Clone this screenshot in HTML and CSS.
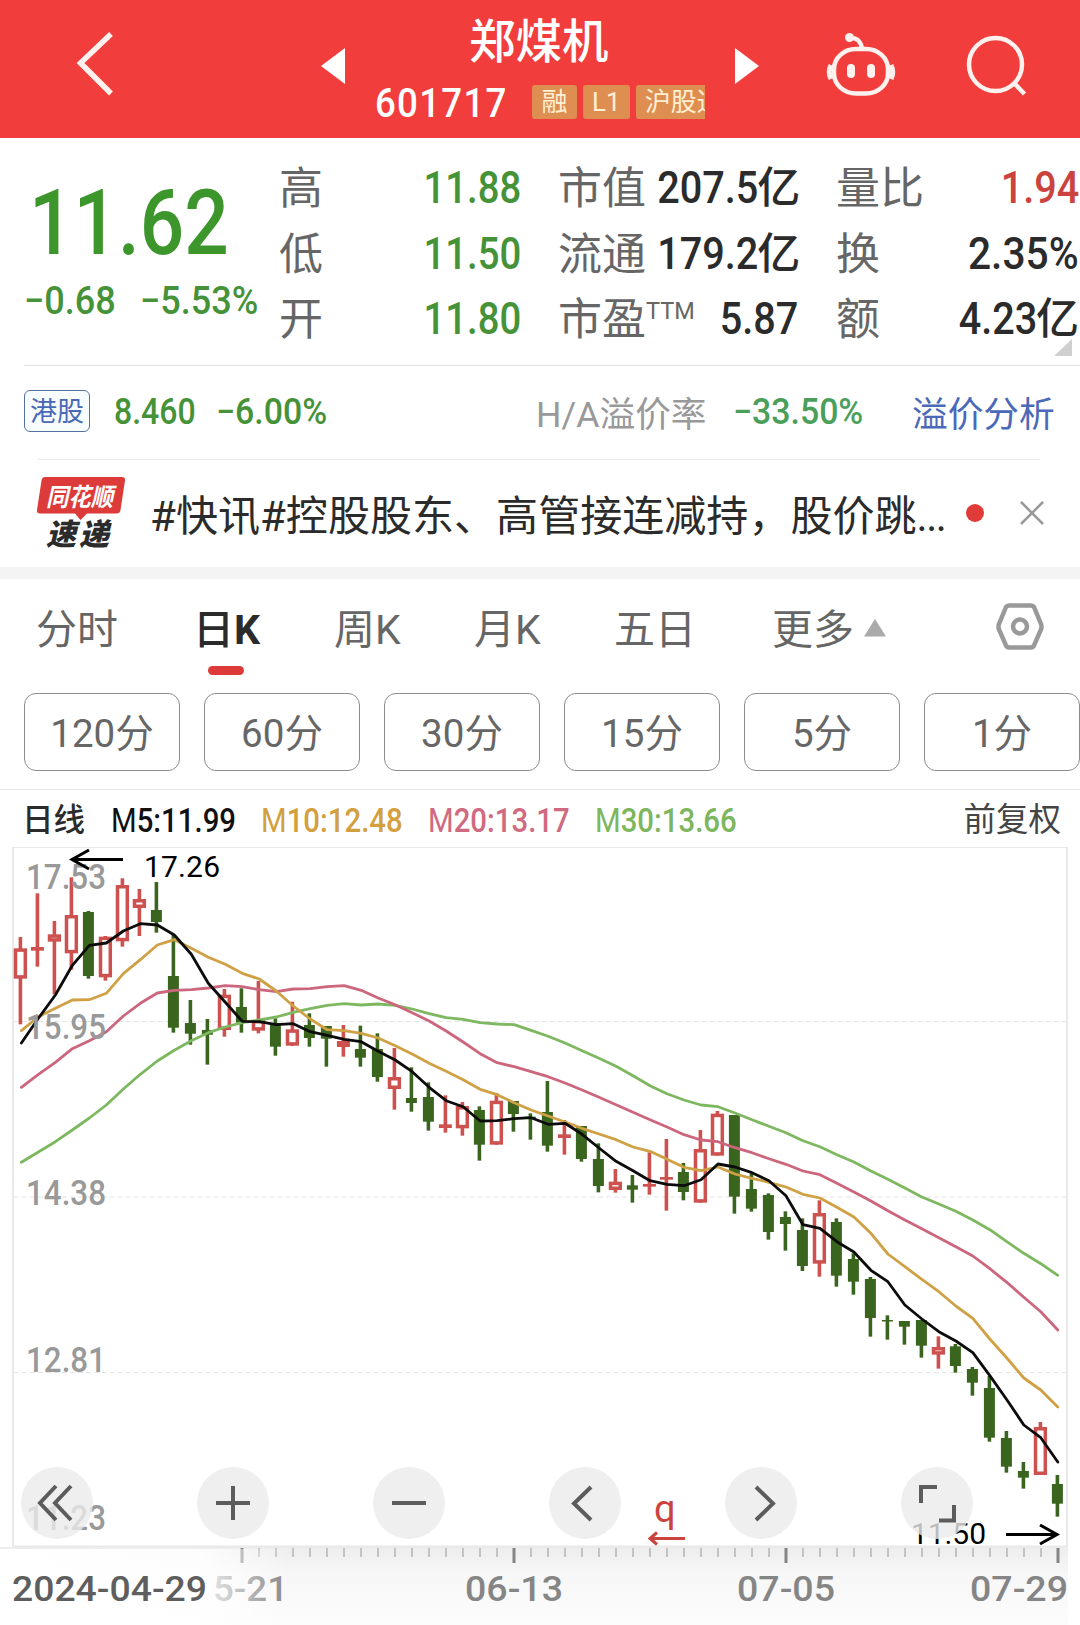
FILE: index.html
```html
<!DOCTYPE html>
<html lang="zh-CN">
<head>
<meta charset="utf-8">
<title>郑煤机 601717</title>
<link rel="stylesheet" href="styles.css">
</head>
<body>
<header class="topbar">
  <svg class="back" width="40" height="68" viewBox="74 30 40 68"><path d="M111 34 80.500 63 111 93.500"/></svg>
  <svg class="prev" width="24" height="36" viewBox="0 0 24 36"><path d="M0 18 24 0V36Z"/></svg>
  <div class="stock">
    <h1>郑煤机</h1>
    <div class="code"><span class="num">601717</span><div class="tags"><i>融</i><i>L1</i><i>沪股通</i></div></div>
  </div>
  <svg class="next" width="24" height="36" viewBox="0 0 24 36"><path d="M24 18 0 0V36Z"/></svg>
  <svg class="robot" width="72" height="66" viewBox="825 32 72 66">
    <rect x="834" y="49" width="54" height="44.500" rx="22" ry="20"/>
    <path d="M862 49C861 41 857 38 850 37.500"/>
    <path d="M831 65Q827.500 72 831 79M891 65Q894.500 72 891 79" stroke-width="5"/>
    <circle class="fill" cx="849.500" cy="37.500" r="4.500"/>
    <rect class="fill" x="847" y="64" width="8" height="14" rx="4"/>
    <rect class="fill" x="867" y="64" width="8" height="14" rx="4"/>
  </svg>
  <svg class="search" width="64" height="64" viewBox="964 34 64 64"><circle cx="994.500" cy="64.500" r="26.500"/><path d="M1013 83 1023.500 94"/></svg>
</header>

<section class="quote">
  <div class="price">
    <div class="last num">11.62</div>
    <div class="change"><span class="num">−0.68</span><span class="num">−5.53%</span></div>
  </div>
  <dl class="col c1">
    <div><dt>高</dt><dd><span class="num down">11.88</span></dd></div>
    <div><dt>低</dt><dd><span class="num down">11.50</span></dd></div>
    <div><dt>开</dt><dd><span class="num down">11.80</span></dd></div>
  </dl>
  <dl class="col c2">
    <div><dt>市值</dt><dd><span class="num">207.5</span><b>亿</b></dd></div>
    <div><dt>流通</dt><dd><span class="num">179.2</span><b>亿</b></dd></div>
    <div><dt>市盈<sup>TTM</sup></dt><dd><span class="num">5.87</span></dd></div>
  </dl>
  <dl class="col c3">
    <div><dt>量比</dt><dd><span class="num up">1.94</span></dd></div>
    <div><dt>换</dt><dd><span class="num pct">2.35%</span></dd></div>
    <div><dt>额</dt><dd><span class="num">4.23</span><b>亿</b></dd></div>
  </dl>
  <svg class="corner" width="18" height="17" viewBox="0 0 18 17"><path d="M18 0V17H0Z"/></svg>
</section>

<section class="hk">
  <span class="hk-tag">港股</span>
  <span class="hk-price"><span class="num">8.460</span></span>
  <span class="hk-chg"><span class="num">−6.00%</span></span>
  <span class="ha">H/A溢价率</span>
  <span class="ha-val"><span class="num">−33.50%</span></span>
  <a class="ha-link">溢价分析</a>
</section>

<section class="news">
  <div class="logo">
    <svg width="90" height="46" viewBox="36 476 90 46"><path d="M45 477H122Q125.500 477 125 480.500L120.500 510Q120 513.500 116.500 513.500H87L80.500 520 75 513.500H40Q36.500 513.500 37 510L41.500 480.500Q42 477 45 477Z"/><text x="46" y="505.500" textLength="67" lengthAdjust="spacingAndGlyphs">同花顺</text></svg>
    <b>速递</b>
  </div>
  <p>#快讯#控股股东、高管接连减持，股价跳<span>...</span></p>
  <i class="dot"></i>
  <svg class="close" width="26" height="26" viewBox="0 0 26 26"><path d="M2 2 24 24M24 2 2 24"/></svg>
</section>

<nav class="tabs">
  <span>分时</span><span class="active">日<b>K</b></span><span>周K</span><span>月K</span><span>五日</span>
  <span class="more">更多<svg width="24" height="19" viewBox="0 0 24 19"><path d="M12 1 23 18.500H1Z"/></svg></span>
  <svg class="gear" width="50" height="48" viewBox="995 603 50 48"><path d="M1009 605.500H1031Q1033 605.500 1034 607L1041 624Q1042 627 1041 629.500L1034 645.500Q1033 647.500 1031 647.500H1009Q1007 647.500 1006 645.500L999 629.500Q998 627 999 624L1006 607Q1007 605.500 1009 605.500Z"/><circle cx="1020" cy="626.500" r="7"/></svg>
</nav>
<div class="periods"><span>120分</span><span>60分</span><span>30分</span><span>15分</span><span>5分</span><span>1分</span></div>

<div class="legend">
  <b class="name">日线</b>
  <div class="m5"><span class="num"><i>M</i>5:11.99</span></div><div class="m10"><span class="num"><i>M</i>10:12.48</span></div><div class="m20"><span class="num"><i>M</i>20:13.17</span></div><div class="m30"><span class="num"><i>M</i>30:13.66</span></div>
  <span class="adj">前复权</span>
</div>

<section class="chart">
  <svg id="kline" width="1080" height="778" viewBox="0 847 1080 778">
    <defs>
      <linearGradient id="shade" x1="0" y1="0" x2="0" y2="1"><stop offset="0" stop-color="#ededed"/><stop offset=".35" stop-color="#f7f7f7"/><stop offset="1" stop-color="#fcfcfc"/></linearGradient>
      <linearGradient id="fade" x1="0" y1="0" x2="1" y2="0"><stop offset="0" stop-color="#fff"/><stop offset=".7" stop-color="#fff" stop-opacity=".85"/><stop offset="1" stop-color="#fff" stop-opacity="0"/></linearGradient>
    </defs>
    <rect x="0" y="1547" width="1068" height="78" fill="url(#shade)"/>
    <rect class="frame" x="13" y="847" width="1054" height="699.500"/>
    <path class="grid" d="M14 1021.500H1066M14 1197H1066M14 1372.500H1066"/>
    <g id="candles"></g>
    <g id="averages"></g>
    <g class="scale">
      <text x="26" y="889" textLength="80" lengthAdjust="spacingAndGlyphs">17.53</text>
      <text x="26" y="1039" textLength="80" lengthAdjust="spacingAndGlyphs">15.95</text>
      <text x="26" y="1205" textLength="80" lengthAdjust="spacingAndGlyphs">14.38</text>
      <text x="26" y="1372" textLength="80" lengthAdjust="spacingAndGlyphs">12.81</text>
      <text x="26" y="1530" textLength="80" lengthAdjust="spacingAndGlyphs">11.23</text>
    </g>
    <path class="arrow" d="M123 859.500H73M89 850 72 859.500 89 869"/>
    <text class="mark" x="144" y="877" textLength="76">17.26</text>
    <path class="arrow" d="M1006 1534.500H1056M1040 1525 1057 1534.500 1040 1544"/>
    <text class="mark" x="911" y="1543.500" textLength="75">11.50</text>
    <text class="q" x="654" y="1522">q</text>
    <path class="qarrow" d="M685 1538.500H650M657 1532.500 650 1538.500 657 1544.500"/>
    <g id="ticks"></g>
    <g class="dates">
      <text x="213" y="1601" textLength="75" lengthAdjust="spacingAndGlyphs">5-21</text>
      <text x="465" y="1601" textLength="98" lengthAdjust="spacingAndGlyphs">06-13</text>
      <text x="737" y="1601" textLength="98" lengthAdjust="spacingAndGlyphs">07-05</text>
      <text x="970" y="1601" textLength="98" lengthAdjust="spacingAndGlyphs">07-29</text>
      <rect x="0" y="1549" width="290" height="76" fill="url(#fade)"/>
      <text class="first" x="12" y="1601" textLength="195" lengthAdjust="spacingAndGlyphs">2024-04-29</text>
    </g>
  </svg>
  <div class="tools">
    <svg viewBox="0 0 72 72"><path d="M35 19 19 36 35 53M50 19 34 36 50 53"/></svg>
    <svg viewBox="0 0 72 72"><path d="M36 19V53M19 36H53"/></svg>
    <svg viewBox="0 0 72 72"><path d="M19 36H53"/></svg>
    <svg viewBox="0 0 72 72"><path d="M42 20 25 36.500 42 53"/></svg>
    <svg viewBox="0 0 72 72"><path d="M31 20 48 36.500 31 53"/></svg>
    <svg viewBox="0 0 72 72"><path d="M20 36V20H36M53 38V53.500H38"/></svg>
  </div>
</section>
<script src="chart.js"></script>
</body>
</html>
```
FILE: styles.css
```css
* { box-sizing: border-box; }
body { margin: 0; width: 1080px; height: 1625px; overflow: hidden; background: #fff; color: #2b2b2b; font-family: Roboto, "Noto Sans CJK SC", sans-serif; }
h1, p, dl, dd { margin: 0; }
i { font-style: normal; }
svg { display: block; flex: none; }
/* Figures are set narrower than the text face. */
.num { display: inline-block; font-weight: 500; white-space: nowrap; transform: scaleX(.89); transform-origin: 0 50%; }
.down { color: #459238; }
.up { color: #cb433f; }

.topbar { display: flex; height: 138px; background: #f13d3c; color: #fff; }
.topbar svg { fill: none; stroke: #fff2ee; stroke-width: 4.500; }
.topbar .prev, .topbar .next { fill: #fff; stroke: none; margin-top: 48px; }
.topbar .fill { fill: #fff2ee; stroke: none; }
.back { margin: 30px 0 0 74px; }
.topbar .back { stroke-width: 5.500; }
.prev { margin-left: 207px; }
.stock { width: 360px; margin-left: 30px; }
.stock h1 { margin: 13px 0 0 94px; font-size: 46.500px; line-height: 58px; font-weight: 500; }
.code { display: flex; height: 34px; margin-top: 14px; }
.code .num { width: 157px; font-size: 41px; line-height: 36px; letter-spacing: 1.400px; }
.code .num { transform: scaleX(.895); }
.tags { flex: none; display: flex; gap: 6px; width: 173px; overflow: hidden; }
.tags i { flex: none; height: 34px; padding: 0 9px; border-radius: 3px; background: #df8e52; color: #fff0d2; font-size: 26px; line-height: 35px; }
.tags i:first-child { padding: 0 9.500px; }
.robot { margin: 32px 0 0 66px; }
.search { margin: 34px 0 0 68px; }

.quote { position: relative; display: flex; height: 228px; margin-left: 24px; border-bottom: 1px solid #dedede; }
.price { width: 255px; color: #3c962b; }
.last { margin: 33px 0 0 5px; font-size: 90px; line-height: 106px; }
.price .last { transform: scaleX(.87); }
.change { display: flex; color: #459238; font-size: 39px; line-height: 48px; }
.price .change .num { transform: scaleX(.925); }
.change .num:first-child { width: 116px; }
.col { padding-top: 18px; }
.col > div { display: flex; justify-content: space-between; height: 65.500px; line-height: 65px; white-space: nowrap; }
.col dt { color: #666; font-size: 44px; padding-top: 1px; }
.col dd { font-size: 44px; }
.col .num { transform-origin: 100% 50%; }
.c1 .num { transform: scaleX(.87); }
.c2 .num, .c3 .num { transform: scaleX(.9); }
.col .pct { transform: scaleX(.925); }
.col b { font-weight: 500; font-size: 43px; margin-left: -1px; }
.col sup { position: relative; top: 0; font-size: 23.500px; line-height: 0; }
.c1 { width: 242px; }
.c2 { width: 240px; margin-left: 37px; }
.c3 { width: 243px; margin-left: 38px; }
.corner { position: absolute; right: 8px; bottom: 9px; fill: #cfcfcf; }

.hk { display: flex; align-items: center; height: 94px; margin: 0 40px 0 38px; padding-bottom: 1px; border-bottom: 1px solid #e9e9e9; font-size: 36px; white-space: nowrap; }
.hk > * { flex: none; }
.hk-tag { margin: -3px 0 0 -14px; width: 66px; height: 42px; border: 1px solid #56709f; border-radius: 6px; background: #f7fcff; color: #4968b5; font-size: 27px; line-height: 42px; text-align: center; }
.hk-price { width: 102px; margin-left: 24px; color: #459238; }
.hk-chg { width: 320px; color: #459238; }
.hk-chg .num, .ha-val .num { transform: scaleX(.94); }
.ha { width: 197px; margin-top: -2px; color: #999; font-size: 35.700px; }
.ha-val { width: 179px; color: #4a9f5a; }
.ha-link { margin-top: -2px; color: #4a69b8; font-size: 35.700px; }

.news { display: flex; align-items: center; height: 119px; border-bottom: 12px solid #f4f4f4; white-space: nowrap; }
.logo { width: 116px; height: 107px; padding: 16px 0 0 36px; }
.logo path { fill: #dd3b39; }
.logo text { fill: #fff; font: italic 700 25px "Noto Sans CJK SC"; }
.logo b { display: block; margin-left: 10px; font: italic 900 30px/30px "Noto Sans CJK SC"; letter-spacing: 3px; margin-top: -5px; }
.news p { width: 814px; padding-left: 34px; font-size: 42.050px; margin-top: -3px; }
.news p span { letter-spacing: -1.500px; }
.dot { width: 18px; height: 18px; border-radius: 50%; background: #e13b39; margin-left: 36px; margin-top: -2px; }
.close { margin-left: 35px; margin-top: -2px; stroke: #999; stroke-width: 2.500; }

.tabs { position: relative; display: flex; height: 114px; padding-left: 36px; font-size: 41px; line-height: 102px; color: #666; white-space: nowrap; }
.tabs span { width: 140px; }
.tabs span:first-child { width: 157px; }
.tabs .active { position: relative; width: 141px; color: #2b2b2b; font-weight: 500; }
.active::after { content: ""; position: absolute; left: 15px; top: 87px; width: 36px; height: 9px; border-radius: 5px; background: #dd3b39; }
.tabs .more { display: flex; align-items: center; gap: 9px; width: 223px; height: 102px; margin-left: 18px; }
.more svg { fill: #aaa; margin-top: -6px; }
.gear { margin-top: 24px; fill: none; stroke: #999; stroke-width: 4.500; }

.periods { display: flex; gap: 24px; height: 96px; padding-left: 24px; }
.periods span { flex: none; width: 156px; height: 78px; border: 1px solid #8c8c8c; border-radius: 12px; color: #666; font-size: 38.500px; line-height: 80px; text-align: center; }

.legend { display: flex; height: 58px; border-top: 1px solid #e6e6e6; padding: 0 18px 0 22px; font-size: 33px; line-height: 61px; white-space: nowrap; }
.legend > * { flex: none; }
.legend i { font-weight: 400; }
.legend .name { width: 89px; font-size: 31.500px; font-weight: 500; }
.m5 { width: 150px; color: #111; }
.m10 { width: 167px; color: #d3a03f; }
.m20 { width: 167px; color: #cf6a80; }
.m30 { width: 150px; color: #7db65c; }
.adj { margin-left: auto; margin-right: 1px; font-size: 32.500px; color: #444; }

.chart { position: relative; height: 778px; }
.frame { fill: none; stroke: #e9e9e9; stroke-width: 2; }
.grid { fill: none; stroke: #e4e4e4; stroke-dasharray: 5 3; }
.scale { fill: #999; font-size: 35px; font-weight: 500; }
.arrow { fill: none; stroke: #000; stroke-width: 3; }
.mark { fill: #000; font-size: 30px; }
.q { fill: #cb433f; font-size: 38px; }
.qarrow { fill: none; stroke: #cb433f; stroke-width: 3; }
.dates { fill: #858585; font-size: 35px; font-weight: 500; }
.dates .first { fill: #5e5e5e; }
.rise { fill: #fff; stroke: #cd514e; stroke-width: 3.500; }
.fall { fill: #3a651f; stroke: #3a651f; }
.wick { stroke-width: 3.600; }
.avg { fill: none; stroke-width: 2.800; stroke-linejoin: round; stroke-linecap: round; }
.tick { stroke: #c2c2c2; stroke-width: 2; }
.tick.major { stroke: #858585; stroke-width: 3; }
.tools { position: absolute; left: 21px; top: 620px; display: flex; gap: 104px; }
.tools svg { width: 72px; height: 72px; border-radius: 50%; background: rgba(235, 235, 235, .8); fill: none; stroke: #5c5c5c; stroke-width: 4; }
```
FILE: chart.js
```js
const NS = 'http://www.w3.org/2000/svg';
const X0 = 20.4, STEP = 17;

function add(parent, tag, attrs) {
  const el = document.createElementNS(NS, tag);
  for (const k in attrs) el.setAttribute(k, attrs[k]);
  parent.appendChild(el);
}

// Each series is stored in thirds of a pixel below a base line.
const groups = [
  { base: 840, rows: 'r 291 553 325 416,r 160 380 321 332,r 243 463 283 305,r 112 389 225 340,g 213 416 216 408,r 288 422 290 412,r 115 320 135 304,r 147 288 177 204,g 126 278 210 246,g 285 578 408 563,g 480 614 549 581,g 537 674 570 584,r 447 590 464 570,g 445 578 501 548,r 423 580 540 572,g 535 647 550 620,r 485 618 568 617,g 520 620 555 594,g 558 680 558 596,r 555 650 603 621' },
  { base: 980, rows: 'g 137 260 207 233,g 160 305 207 291,r 204 389 291 327,g 262 395 354 369,g 307 452 351 425,r 346 458 433 444,r 366 467 378 445,g 379 542 390 494,r 339 494 362 494,g 363 455 363 402,g 400 479 410 415,g 303 515 396 497,r 420 524 463 474,g 438 545 438 537,g 490 637 537 618,r 567 638 605 630,g 585 668 616 629,r 517 644 612 620,r 477 692 591 599,g 549 661 576 636,r 450 668 507 668,r 393 527 401 527' },
  { base: 1090, rows: 'g 75 371 75 320,g 250 365 297 356,g 310 449 315 426,g 364 482 381 402,g 385 543 420 528,r 331 560 369 521,g 385 590 396 557,g 490 614 507 575,g 561 740 567 684,g 676 749 690 694,g 693 764 693 710,g 690 803 690 767,r 739 836 771 794,g 762 848 769 828,g 831 917 837 878,g 858 1055 894 1043,g 1023 1148 1044 1130,g 1116 1196 1143 1163,r 996 1155 1011 1155,g 1155 1280 1182 1241' }
];

const candles = document.getElementById('candles');
let n = 0;
for (const g of groups) {
  for (const row of g.rows.split(',')) {
    const [kind, ...v] = row.split(' ');
    const [hi, lo, top, bottom] = v.map(t => g.base + t / 3);
    const x = X0 + STEP * n++;
    const cls = kind === 'r' ? 'rise' : 'fall';
    add(candles, 'path', { class: cls + ' wick', d: `M${x} ${hi}V${lo}` });
    if (kind === 'r' && bottom - top > 6.5) {
      add(candles, 'rect', { class: cls, x: x - 4.9, y: top + 1.75, width: 9.8, height: bottom - top - 3.5 });
    } else {
      const w = kind === 'r' ? 13 : 11;
      add(candles, 'rect', { fill: kind === 'r' ? '#cd514e' : '#3a651f', x: x - w / 2, y: top, width: w, height: Math.max(bottom - top, 1.5) });
    }
  }
}

const averages = [
  ['#7db860', [967,936,905,870,834,795,747,703,663,631,602,578,561,548,540,531,517,506,496,491], [75,72,76,87,101,113,118,128,132,134,151,169,189,212,235,259,287,317,341,360,375], [50,69,89,109,128,152,170,194,216,243,268,294,321,342,364,390,419,455,490,521,556]],
  ['#cc667d', [742,703,667,626,602,575,528,490,459,451,449,444,437,440,449,455,447,446,440,437], [31,54,74,98,123,153,186,221,248,260,275,290,309,330,352,374,397,419,441,464,480], [155,173,188,206,223,243,254,280,306,333,362,390,416,443,470,498,536,577,622,665,720]],
  ['#d0a144', [572,530,505,480,479,460,401,359,315,299,325,352,373,400,417,453,498,537,569,572], [160,174,197,222,250,274,299,328,344,368,390,408,426,445,462,479,501,514,538,562,572], [231,252,265,277,291,313,324,352,381,430,492,530,568,605,648,685,747,804,864,900,951]],
  ['#0c0c0c', [609,535,465,376,316,309,273,251,255,285,343,430,487,544,545,554,551,575,586,598], [185,214,240,275,322,362,380,423,422,416,413,433,430,463,504,544,572,602,613,617,599], [222,231,248,272,317,404,415,455,486,541,575,645,687,725,753,788,857,929,1005,1043,1116]]
];
for (const [color, a, b, c] of averages) {
  const ys = [...a.map(v => 840 + v / 3), ...b.map(v => 980 + v / 3), ...c.map(v => 1090 + v / 3)];
  const points = ys.map((y, i) => `${X0 + 1 + (STEP - 0.01) * i},${y.toFixed(1)}`).join(' ');
  add(document.getElementById('averages'), 'polyline', { class: 'avg', stroke: color, points });
}

const ticks = document.getElementById('ticks');
for (let i = 0; i <= 48; i++) {
  const major = i % 16 === 0;
  const x = 242 + i * STEP;
  add(ticks, 'path', { class: major ? 'tick major' : 'tick', d: `M${x} 1548V${major ? 1563 : 1557}` });
}
```
